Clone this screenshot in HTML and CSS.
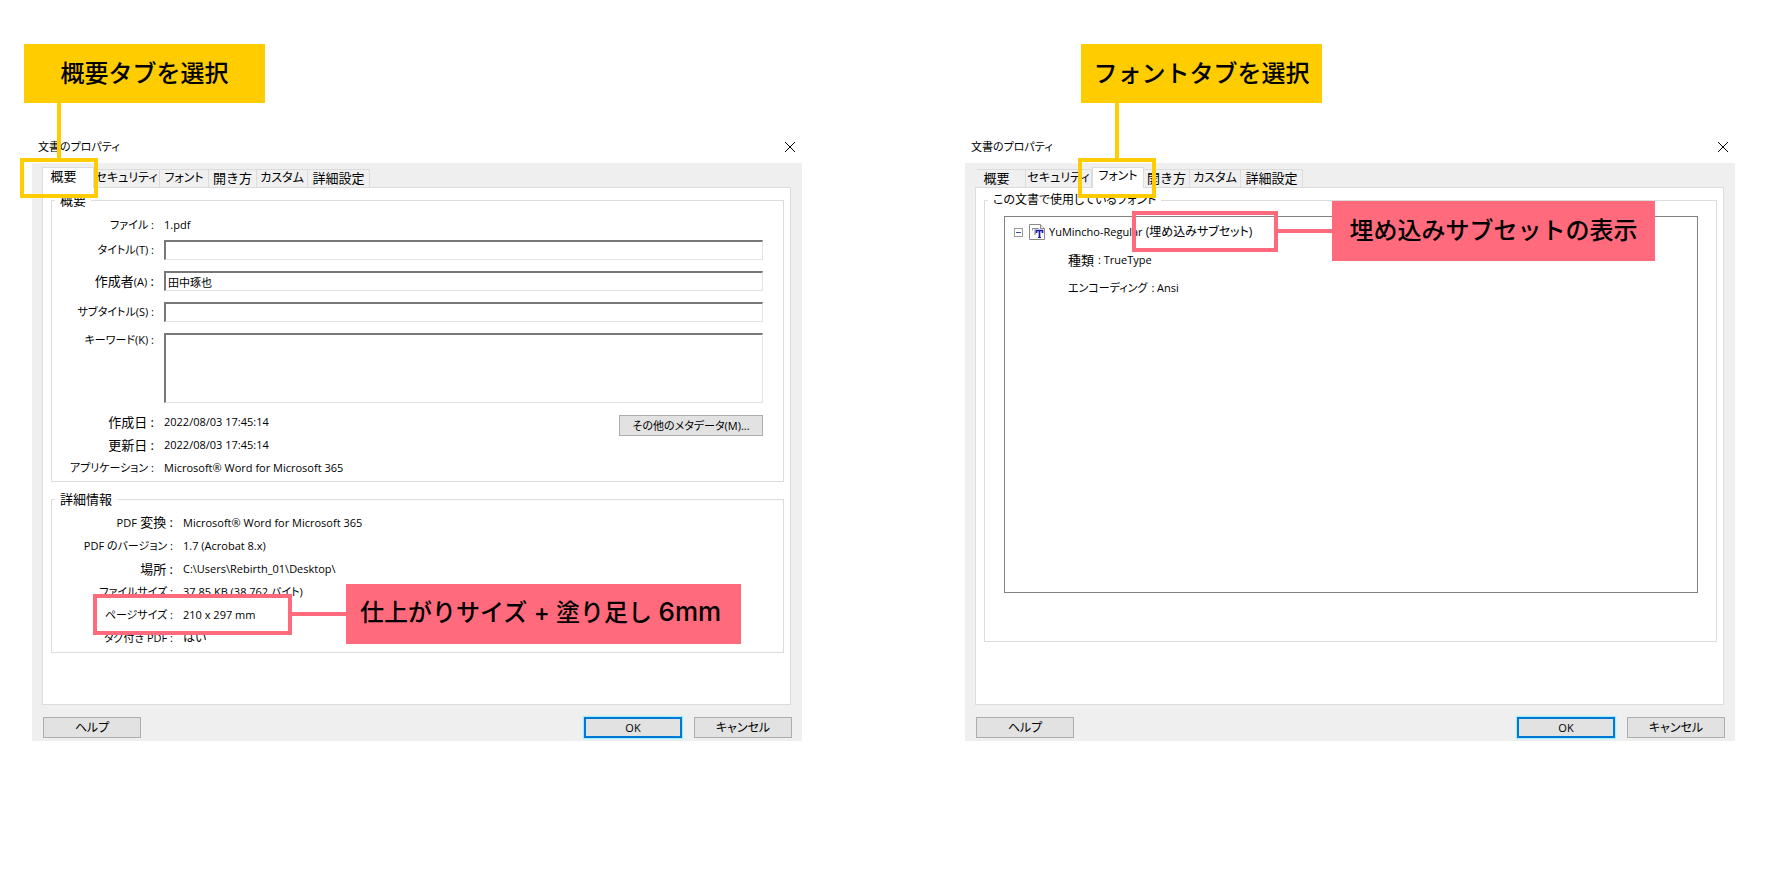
FILE: index.html
```html
<!DOCTYPE html>
<html lang="ja">
<head>
<meta charset="utf-8">
<title>文書のプロパティ</title>
<link rel="stylesheet" href="styles.css">
</head>
<body>
<main class="page">

  <section class="dialog" aria-label="文書のプロパティ 概要">
    <header class="titlebar">
      <h2 class="title">文書のプロパティ</h2>
      <button class="close" type="button" aria-label="閉じる"><svg width="12" height="12" viewBox="0 0 12 12"><path d="M1 1 11 11M11 1 1 11"/></svg></button>
    </header>
    <div class="body">
      <div class="tabs" role="tablist">
        <button class="tab tab-overview active" role="tab" aria-selected="true">概要</button>
        <button class="tab tab-security kana" role="tab">セキュリティ</button>
        <button class="tab tab-font kana" role="tab">フォント</button>
        <button class="tab tab-open" role="tab">開き方</button>
        <button class="tab tab-custom kana" role="tab">カスタム</button>
        <button class="tab tab-detail" role="tab">詳細設定</button>
      </div>
      <div class="panel" role="tabpanel">
        <fieldset class="group group-overview">
          <legend>概要</legend>
          <dl class="facts">
            <dt class="kana">ファイル :</dt><dd>1.pdf</dd>
          </dl>
          <div class="fields">
            <label class="kana" for="f-title">タイトル<small>(T)</small> :</label><input id="f-title" type="text">
            <label for="f-author">作成者<small>(A)</small> :</label><input id="f-author" type="text" value="田中琢也">
            <label class="kana" for="f-sub">サブタイトル<small>(S)</small> :</label><input id="f-sub" type="text">
            <label class="kana label-top" for="f-key">キーワード<small>(K)</small> :</label><textarea id="f-key"></textarea>
          </div>
          <div class="meta">
            <dl class="facts">
              <dt>作成日 :</dt><dd>2022/08/03 17:45:14</dd>
              <dt>更新日 :</dt><dd>2022/08/03 17:45:14</dd>
              <dt class="kana">アプリケーション :</dt><dd>Microsoft® Word for Microsoft 365</dd>
            </dl>
            <button class="button button-wide kana" type="button">その他のメタデータ<small>(M)</small>...</button>
          </div>
        </fieldset>
        <fieldset class="group group-details">
          <legend>詳細情報</legend>
          <dl class="facts facts-wide">
            <dt><span class="latin">PDF</span> 変換 :</dt><dd>Microsoft® Word for Microsoft 365</dd>
            <dt class="kana"><span class="latin">PDF</span> のバージョン :</dt><dd>1.7 (Acrobat 8.x)</dd>
            <dt>場所 :</dt><dd>C:\Users\Rebirth_01\Desktop\</dd>
            <dt class="kana">ファイルサイズ :</dt><dd class="compact">37.85 KB (38,762 バイト)</dd>
            <dt class="kana">ページサイズ :</dt><dd>210 x 297 mm</dd>
            <dt class="kana">タグ付き <span class="latin">PDF</span> :</dt><dd class="kana">はい</dd>
          </dl>
        </fieldset>
      </div>
      <footer class="actions">
        <button class="button button-help kana" type="button">ヘルプ</button>
        <button class="button button-default latin" type="button">OK</button>
        <button class="button kana" type="button">キャンセル</button>
      </footer>
    </div>
    <div class="tab-note tab-note-overview">概要タブを選択</div>
    <div class="tab-line tab-line-overview"></div>
    <div class="tab-frame tab-frame-overview"></div>
    <div class="callout callout-size">
      <div class="callout-frame"></div>
      <div class="callout-line"></div>
      <div class="callout-note">仕上がりサイズ + 塗り足し <span class="measure">6mm</span></div>
    </div>
  </section>

  <section class="dialog" aria-label="文書のプロパティ フォント">
    <header class="titlebar">
      <h2 class="title">文書のプロパティ</h2>
      <button class="close" type="button" aria-label="閉じる"><svg width="12" height="12" viewBox="0 0 12 12"><path d="M1 1 11 11M11 1 1 11"/></svg></button>
    </header>
    <div class="body">
      <div class="tabs tabs-inset" role="tablist">
        <button class="tab tab-overview" role="tab">概要</button>
        <button class="tab tab-security kana" role="tab">セキュリティ</button>
        <button class="tab tab-font kana active" role="tab" aria-selected="true">フォント</button>
        <button class="tab tab-open" role="tab">開き方</button>
        <button class="tab tab-custom kana" role="tab">カスタム</button>
        <button class="tab tab-detail" role="tab">詳細設定</button>
      </div>
      <div class="panel" role="tabpanel">
        <fieldset class="group group-fonts">
          <legend class="kana">この文書で使用しているフォント</legend>
          <ul class="tree">
            <li class="tree-root">
              <svg class="toggle" width="9" height="9" viewBox="0 0 9 9"><rect x=".5" y=".5" width="8" height="8" fill="#fff" stroke="#9b9b9b"/><path d="M2 4.5h5" stroke="#3b4f9a"/></svg>
              <svg class="font-icon" width="16" height="16" viewBox="0 0 16 16"><path d="M.5.5h11l4 4v11H.5z" fill="#fff" stroke="#8a8a8a"/><path d="M11.5.5v4h4" fill="#eee" stroke="#8a8a8a"/><path d="M3.500 6.500v-2h6M6 4.500V10M5 10h2" fill="none" stroke="#8b8b8b"/><path d="M7.500 9V6.500h6V9M10.500 6.500V14" fill="none" stroke="#1717a8" stroke-width="1.700"/><path d="M9 13.500h3" stroke="#1717a8"/></svg>
              <span class="kana"><span class="latin">YuMincho-Regular</span> (埋め込みサブセット)</span>
            </li>
            <li class="tree-leaf">種類 <span class="latin">: TrueType</span></li>
            <li class="tree-leaf kana compact">エンコーディング <span class="latin">: Ansi</span></li>
          </ul>
        </fieldset>
      </div>
      <footer class="actions">
        <button class="button button-help kana" type="button">ヘルプ</button>
        <button class="button button-default latin" type="button">OK</button>
        <button class="button kana" type="button">キャンセル</button>
      </footer>
    </div>
    <div class="tab-note tab-note-font">フォントタブを選択</div>
    <div class="tab-line tab-line-font"></div>
    <div class="tab-frame tab-frame-font"></div>
    <div class="callout callout-subset">
      <div class="callout-frame"></div>
      <div class="callout-line"></div>
      <div class="callout-note">埋め込みサブセットの表示</div>
    </div>
  </section>

</main>
</body>
</html>
```

FILE: styles.css
```css
* { box-sizing: border-box; }

body {
  margin: 0;
  background: #fff;
  color: #000;
  font: 13px/18px "Open Sans", "Noto Sans CJK JP", sans-serif;
}

button, input, textarea { font: inherit; color: inherit; }
dl, dd, ul, h2 { margin: 0; padding: 0; }
small, .latin { font-size: 11px; }
.kana { font-size: 12px; font-feature-settings: "palt"; }
.compact, dt.kana, label.kana { font-size: 11px; font-feature-settings: "palt"; }

.page {
  display: grid;
  grid-template-columns: 1fr 1fr;
  gap: 163px;
  align-items: start;
  padding: 130px 33px 0 32px;
}

.dialog { position: relative; }

.titlebar {
  display: flex;
  align-items: center;
  justify-content: space-between;
  height: 33px;
  padding: 0 6px;
}
.title { font-size: 11px; font-weight: 400; font-feature-settings: "palt"; }
.close { display: flex; padding: 0; border: 0; background: none; }
.close svg { stroke: #000; stroke-width: 1; fill: none; }

.body { padding: 4px 11px 3px 10px; background: #efefef; }

.tabs { display: flex; align-items: flex-end; height: 20px; }
.tabs-inset { padding-left: 2px; }
.tab {
  height: 18px;
  padding: 0 0 2px;
  border: 1px solid #dcdcdc;
  border-width: 1px 1px 0 0;
  background: #f0f0f0;
  line-height: 14px;
  white-space: nowrap;
}
.tab.active {
  position: relative;
  height: 21px;
  margin-bottom: -1px;
  padding-bottom: 4px;
  border-left-width: 1px;
  background: #fff;
}
.tab-overview { width: 49px; }
.tab.tab-overview { padding-right: 9px; }
.tab-overview.active { width: 52px; }
.tab-security { width: 66px; }
.tab-font { width: 49px; }
.tab-font.active { width: 52px; }
.tab-open { width: 48px; }
.tab-custom { width: 51px; }
.tab-detail { width: 62px; }
.tabs-inset .tab-open { width: 46px; }

.panel {
  display: flex;
  flex-direction: column;
  gap: 8px;
  min-height: 518px;
  padding: 3px 6px 0 8px;
  border: 1px solid #dcdcdc;
  background: #fff;
}

.group { min-width: 0; margin: 0; border: 1px solid #dcdcdc; }
.group legend { padding: 0 5px; line-height: 18px; }
.group-overview { padding: 4px 20px 2px 3px; }
.group-details { padding: 3px 20px 3px 3px; }
.group-fonts { padding: 7px 18px 48px 19px; }
.group-fonts legend { margin-left: -16px; }

.facts {
  display: grid;
  grid-template-columns: 99px 1fr;
  grid-auto-rows: 23px;
  align-items: center;
  column-gap: 10px;
}
.facts-wide { grid-template-columns: 118px 1fr; }
.facts dt { text-align: right; white-space: nowrap; }
.facts dd { font-size: 11px; white-space: nowrap; }
.facts dd.kana { font-size: 12px; }

.fields {
  display: grid;
  grid-template-columns: 99px 1fr;
  gap: 11px 10px;
  align-items: center;
  margin: 4px 0 7px;
}
.fields label { text-align: right; white-space: nowrap; }
.fields .label-top { align-self: start; line-height: 14px; }
.fields input, .fields textarea {
  display: block;
  width: 100%;
  height: 20px;
  padding: 0 2px;
  border: 1px solid #e3e3e3;
  border-top: 2px solid #777;
  border-left: 2px solid #777;
  border-radius: 0;
  background: #fff;
  font-size: 11px;
  line-height: 16px;
  outline: 0;
}
.fields textarea { height: 70px; resize: none; }

.meta { display: flex; align-items: flex-start; justify-content: space-between; }
.meta .button { margin-top: 5px; }

.button {
  width: 98px;
  height: 21px;
  padding: 0;
  border: 1px solid #adadad;
  background: #e2e2e2;
  line-height: 18px;
  white-space: nowrap;
}
.button-wide { width: 144px; }
.button-wide.kana { font-size: 11px; }
.button-default { border: 2px solid #0078d7; box-shadow: 0 0 1px 1px #9fefff; }

.actions { display: flex; gap: 12px; margin-right: -1px; padding: 12px 0 0 1px; }
.button-help { margin-right: auto; }

.tree {
  height: 377px;
  padding: 1px 9px;
  border: 1px solid #828282;
  list-style: none;
}
.tree li { display: flex; align-items: center; gap: 4px; height: 28px; white-space: nowrap; }
.tree .toggle { margin-right: 2px; }
.tree .tree-leaf { padding-left: 54px; }

.tab-note {
  position: absolute;
  top: -86px;
  width: 241px;
  background: #ffcc00;
}
.tab-note, .callout-note {
  padding-bottom: 4px;
  font: 500 24px/55px "Noto Sans CJK JP", sans-serif;
  text-align: center;
  white-space: nowrap;
}
.tab-line { position: absolute; top: -27px; width: 4px; height: 55px; background: #ffcc00; }
.tab-frame { position: absolute; top: 28px; width: 78px; height: 40px; border: 4px solid #ffcc00; }
.tab-note-overview { left: -8px; }
.tab-line-overview { left: 25px; }
.tab-frame-overview { left: -12px; }
.tab-note-font { left: 116px; }
.tab-line-font { left: 150px; }
.tab-frame-font { left: 113px; }

.callout { position: absolute; display: flex; align-items: center; }
.callout-frame { height: 41px; border: 4px solid #ff6b7d; }
.callout-line { width: 54px; height: 4px; background: #ff6b7d; }
.callout-note { height: 60px; background: #ff6b7d; }
.callout-size { left: 61px; top: 454px; }
.callout-size .callout-frame { width: 199px; }
.callout-size .callout-note {
  width: 395px;
  padding-left: 14px;
  font-family: Inter, "Noto Sans CJK JP", sans-serif;
  text-align: left;
}
.callout-size .measure { font-size: 26px; }
.callout-subset { left: 167px; top: 71px; }
.callout-subset .callout-frame { width: 146px; }
.callout-subset .callout-note { width: 323px; }
```
